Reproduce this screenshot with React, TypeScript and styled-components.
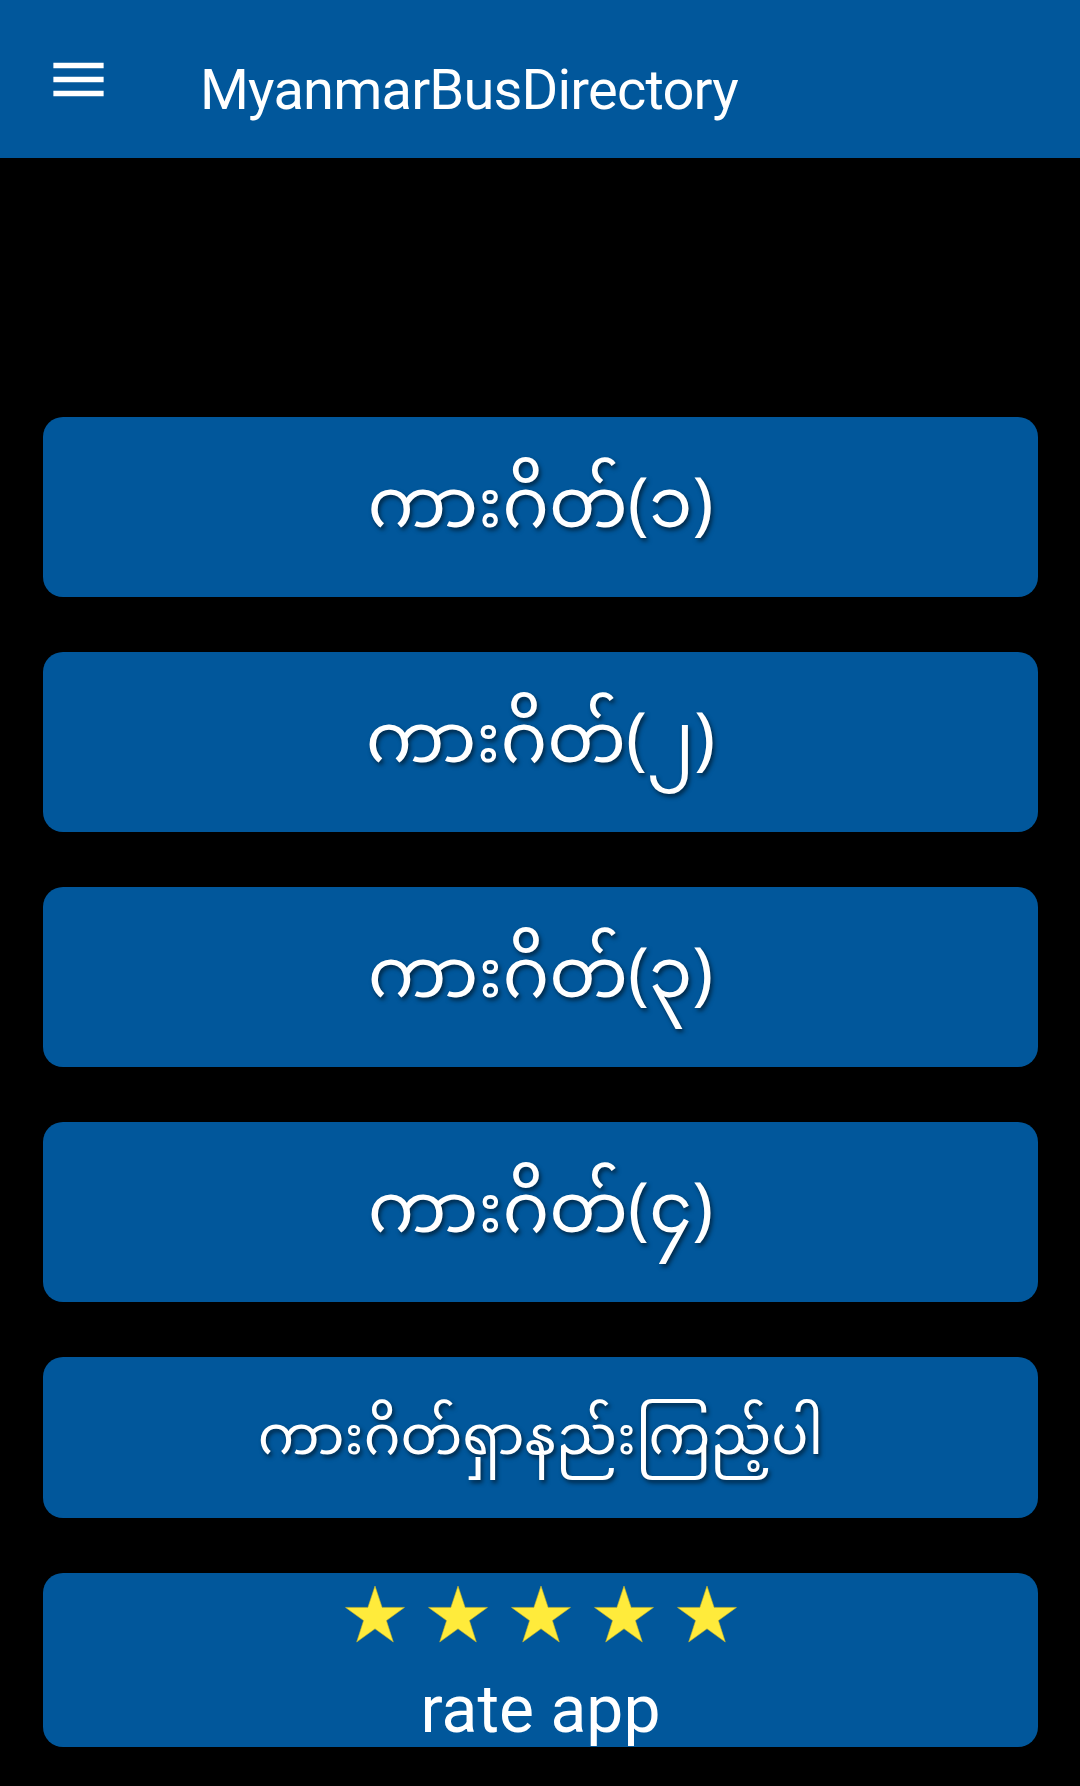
import React from 'react'
import styled, { createGlobalStyle } from 'styled-components'

const GlobalStyle = createGlobalStyle`
  html, body {
    margin: 0;
    padding: 0;
    background: #000;
  }
  body {
    font-family: Roboto, "Noto Sans", "Noto Sans Myanmar", Padauk, sans-serif;
  }
`

const Page = styled.div`
  width: 1080px;
  min-height: 1786px;
  background: #000;
  display: flex;
  flex-direction: column;
`

const Toolbar = styled.header`
  height: 158px;
  background: #01579b;
  display: flex;
  align-items: center;
  box-sizing: border-box;
  padding-left: 45px;
`

const MenuButton = styled.button`
  width: 67px;
  height: 67px;
  padding: 0;
  border: none;
  background: none;
  display: flex;
  align-items: center;
  justify-content: center;
  color: #fff;
`

const Title = styled.h1`
  margin: 0 0 0 88px;
  padding-top: 22px;
  font-family: Roboto, sans-serif;
  font-weight: 400;
  font-size: 56px;
  letter-spacing: -0.8px;
  color: #fff;
`

const Menu = styled.main`
  display: flex;
  flex-direction: column;
  gap: 55px;
  padding: 259px 42px 0 43px;
`

const MenuItem = styled.button<{ $height: number }>`
  height: ${({ $height }) => $height}px;
  border: none;
  border-radius: 20px;
  background: #01579b;
  color: #fff;
  display: flex;
  flex-direction: column;
  align-items: center;
  justify-content: center;
  padding: 0;
  font-family: "Noto Sans Myanmar", Padauk, "Myanmar Text", Roboto, sans-serif;
`

const RateItem = styled(MenuItem)`
  justify-content: flex-start;
  padding-top: 13px;
`

const RouteLabel = styled.span<{ $size: number }>`
  font-size: ${({ $size }) => $size}px;
  line-height: 1;
  padding-top: 8px;
  text-shadow: 2px 3px 4px rgba(0, 0, 0, 0.55);
`

const Stars = styled.div`
  display: flex;
  gap: 23px;
  svg {
    display: block;
  }
`

const RateLabel = styled.span`
  font-family: Roboto, sans-serif;
  font-size: 66px;
  line-height: 66px;
  margin-top: 33px;
`

const MenuIcon = () => (
  <svg width="67" height="67" viewBox="0 0 24 24" fill="#fff">
    <path d="M3 18h18v-2H3v2zm0-5h18v-2H3v2zm0-7v2h18V6H3z" />
  </svg>
)

const Star = () => (
  <svg width="60" height="58" viewBox="0 0 60 58">
    <polygon
      points="30,0 37.1,21.4 59.5,21.4 41.4,34.6 48.3,56 30,42.8 11.7,56 18.6,34.6 0.5,21.4 22.9,21.4"
      fill="#ffeb3b"
      stroke="#c9b52a"
      strokeWidth="0.6"
    />
  </svg>
)

const routes = ['ကားဂိတ်(၁)', 'ကားဂိတ်(၂)', 'ကားဂိတ်(၃)', 'ကားဂိတ်(၄)']

export default function App() {
  return (
    <Page>
      <GlobalStyle />
      <Toolbar>
        <MenuButton aria-label="menu">
          <MenuIcon />
        </MenuButton>
        <Title>MyanmarBusDirectory</Title>
      </Toolbar>
      <Menu>
        {routes.map((r) => (
          <MenuItem key={r} $height={180}>
            <RouteLabel $size={70}>{r}</RouteLabel>
          </MenuItem>
        ))}
        <MenuItem $height={161}>
          <RouteLabel $size={55}>ကားဂိတ်ရှာနည်းကြည့်ပါ</RouteLabel>
        </MenuItem>
        <RateItem $height={174}>
          <Stars>
            {[0, 1, 2, 3, 4].map((i) => (
              <Star key={i} />
            ))}
          </Stars>
          <RateLabel>rate app</RateLabel>
        </RateItem>
      </Menu>
    </Page>
  )
}
